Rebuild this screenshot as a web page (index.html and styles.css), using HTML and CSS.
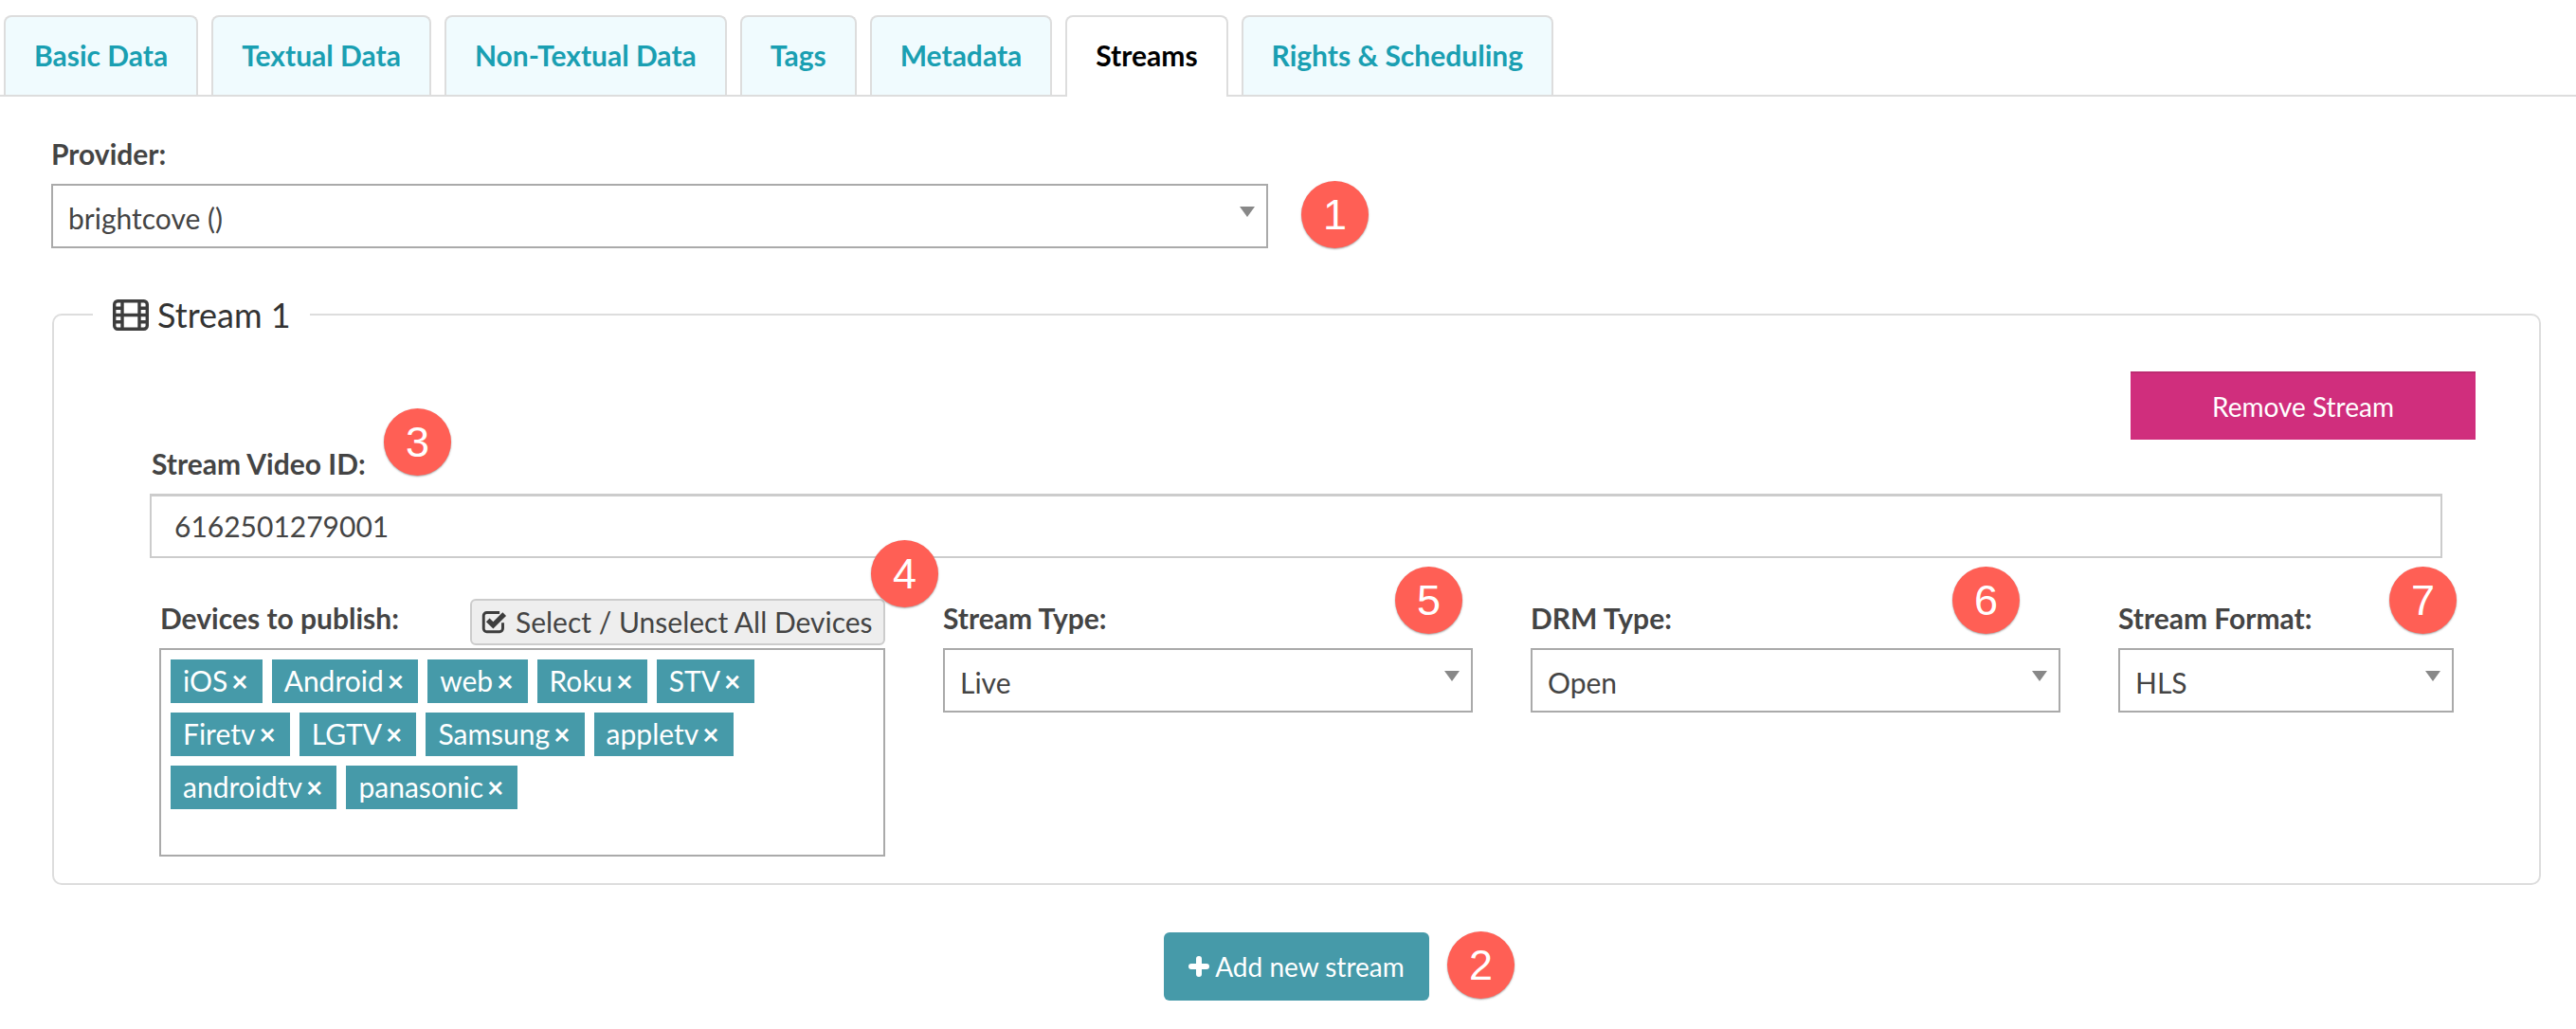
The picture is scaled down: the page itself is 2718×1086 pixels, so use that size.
FILE: index.html
```html
<!DOCTYPE html>
<html lang="en">
<head>
    <meta charset="UTF-8">
    <meta name="viewport" content="width=device-width, initial-scale=1.0">
    <title>Streams</title>
    <link rel="stylesheet" href="styles.css">
</head>
<body>
    <div class="page">
        <ul class="tabs">
            <li class="tab">Basic Data</li>
            <li class="tab">Textual Data</li>
            <li class="tab">Non-Textual Data</li>
            <li class="tab">Tags</li>
            <li class="tab">Metadata</li>
            <li class="tab tab-active">Streams</li>
            <li class="tab">Rights &amp; Scheduling</li>
        </ul>

        <div class="content">
            <div class="provider">
                <label class="field-label">Provider:</label>
                <div class="select-wrap">
                    <select class="select"><option>brightcove ()</option></select>
                </div>
            </div>

            <fieldset class="stream">
                <legend class="stream-legend">
                    <svg class="film-icon" viewBox="0 0 38 33" fill="none" stroke="#3d3d3d" stroke-width="3.4">
                        <rect x="1.7" y="1.7" width="34.6" height="29.6" rx="3.5"/>
                        <path d="M10 2v29M28 2v29M10 16.5h18M2 9.2h8M2 16.5h8M2 23.8h8M28 9.2h8M28 16.5h8M28 23.8h8"/>
                    </svg>
                    Stream 1
                </legend>

                <div class="stream-actions">
                    <button class="btn-remove" type="button">Remove Stream</button>
                </div>

                <div class="video-id">
                    <label class="field-label">Stream Video ID:</label>
                    <input class="text-input" type="text" value="6162501279001">
                </div>

                <div class="stream-row">
                    <div class="col col-devices">
                        <div class="devices-head">
                            <label class="field-label">Devices to publish:</label>
                            <button class="btn-select-all" type="button">
                                <svg class="check-icon" viewBox="0 0 24 23" fill="none">
                                    <path d="M20 12.5V18a3 3 0 0 1-3 3H5a3 3 0 0 1-3-3V6a3 3 0 0 1 3-3h12" stroke="#3d3d3d" stroke-width="2.6"/>
                                    <path d="M6 10l5 5 10.5-10.5" stroke="#3d3d3d" stroke-width="4.6"/>
                                </svg>
                                Select / Unselect All Devices
                            </button>
                        </div>
                        <div class="tag-box">
                            <span class="tag">iOS<b>×</b></span>
                            <span class="tag">Android<b>×</b></span>
                            <span class="tag">web<b>×</b></span>
                            <span class="tag">Roku<b>×</b></span>
                            <span class="tag">STV<b>×</b></span>
                            <span class="tag">Firetv<b>×</b></span>
                            <span class="tag">LGTV<b>×</b></span>
                            <span class="tag">Samsung<b>×</b></span>
                            <span class="tag">appletv<b>×</b></span>
                            <span class="tag">androidtv<b>×</b></span>
                            <span class="tag">panasonic<b>×</b></span>
                        </div>
                    </div>
                    <div class="col col-type">
                        <label class="field-label">Stream Type:</label>
                        <div class="select-wrap">
                            <select class="select"><option>Live</option></select>
                        </div>
                    </div>
                    <div class="col col-type">
                        <label class="field-label">DRM Type:</label>
                        <div class="select-wrap">
                            <select class="select"><option>Open</option></select>
                        </div>
                    </div>
                    <div class="col col-format">
                        <label class="field-label">Stream Format:</label>
                        <div class="select-wrap">
                            <select class="select"><option>HLS</option></select>
                        </div>
                    </div>
                </div>
            </fieldset>

            <div class="add-row">
                <button class="btn-add" type="button">
                    <svg class="plus-icon" viewBox="0 0 22 22" fill="none" stroke="#fff" stroke-width="6" stroke-linecap="round">
                        <path d="M11 3v16M3 11h16"/>
                    </svg>
                    Add new stream
                </button>
            </div>
        </div>

        <!-- numbered callouts sit on top of the form -->
        <span class="badge badge-1">1</span>
        <span class="badge badge-2">2</span>
        <span class="badge badge-3">3</span>
        <span class="badge badge-4">4</span>
        <span class="badge badge-5">5</span>
        <span class="badge badge-6">6</span>
        <span class="badge badge-7">7</span>
    </div>
</body>
</html>
```

FILE: styles.css
```css
body {
    font-family: Lato, "Open Sans", sans-serif;
    font-size: 30px;
    color: #444;
    background-color: #fff;
    margin: 0;
}

.page {
    position: relative;
    height: 1086px;
    overflow: hidden;
}

/* tabs */
.tabs {
    display: flex;
    gap: 14px;
    list-style: none;
    margin: 0;
    padding: 16px 0 0 4px;
    height: 84px;
    box-sizing: content-box;
    border-bottom: 2px solid #ddd;
}

.tab {
    height: 84px;
    box-sizing: border-box;
    padding: 22px 30px 0;
    line-height: 36px;
    font-size: 30px;
    font-weight: bold;
    color: #1a9fb2;
    background-color: #f0fbfe;
    border: 2px solid #ddd;
    border-bottom: none;
    border-radius: 8px 8px 0 0;
}

.tab-active {
    height: 86px;
    color: #000;
    background-color: #fff;
}

/* form */
.content {
    padding: 42px 37px 0 54px;
}

.field-label {
    display: block;
    font-weight: bold;
    line-height: 36px;
    color: #444;
}

.provider {
    width: 1284px;
}

.provider .field-label {
    margin-bottom: 14px;
}

.select-wrap {
    position: relative;
}

.select-wrap::after {
    content: "";
    position: absolute;
    top: 24px;
    right: 14px;
    border-left: 8px solid transparent;
    border-right: 8px solid transparent;
    border-top: 11px solid #888;
}

.select {
    display: block;
    width: 100%;
    height: 68px;
    box-sizing: border-box;
    padding: 3px 16px 0;
    font-family: inherit;
    font-size: 30px;
    color: #444;
    background: #fff;
    border: 2px solid #aaa;
    border-radius: 0;
    appearance: none;
}

.stream {
    margin: 49px 0 0 1px;
    padding: 0 67px 0 101px;
    height: 623px;
    box-sizing: border-box;
    border: 2px solid #ddd;
    border-radius: 10px;
    min-width: 0;
}

.stream-legend {
    margin-left: -60px;
    padding: 0 20px 0 21px;
    font-size: 36px;
    line-height: 42px;
    color: #333;
    display: flex;
    align-items: center;
    gap: 9px;
}

.film-icon {
    width: 38px;
    height: 33px;
}

.stream-actions {
    display: flex;
    justify-content: flex-end;
    margin-top: 39px;
}

.btn-remove {
    width: 364px;
    height: 72px;
    font-family: inherit;
    font-size: 28px;
    color: #fff;
    background-color: #d02e7d;
    border: none;
    border-top: 2px solid #bd2c72;
}

.video-id {
    margin: 7px 35px 0 0;
}

.video-id .field-label {
    margin: 0 0 14px 2px;
}

.text-input {
    display: block;
    width: 100%;
    height: 68px;
    box-sizing: border-box;
    padding: 0 24px 2px;
    font-family: inherit;
    font-size: 30px;
    color: #444;
    border: 2px solid #ccc;
    border-top-width: 3px;
    outline: none;
}

.stream-row {
    display: flex;
    margin: 43px 0 0 10px;
}

.col .field-label {
    margin-bottom: 14px;
}

.col-devices {
    flex: none;
    width: 766px;
    margin-right: 61px;
}

.col-type {
    flex: none;
    width: 559px;
    margin-top: 2px;
    margin-right: 61px;
}

.col-format {
    flex: none;
    width: 354px;
    margin-top: 2px;
}

.devices-head {
    display: flex;
    justify-content: space-between;
    align-items: flex-start;
    height: 52px;
}

.devices-head .field-label {
    margin: 2px 0 0 1px;
}

.btn-select-all {
    width: 438px;
    height: 49px;
    padding: 0 0 2px 10px;
    display: flex;
    align-items: center;
    gap: 9px;
    font-family: inherit;
    font-size: 30px;
    color: #444;
    background-color: #eee;
    border: 2px solid #ccc;
    border-radius: 6px;
}

.check-icon {
    width: 27px;
    height: 26px;
}

.tag-box {
    height: 220px;
    box-sizing: border-box;
    padding: 10px;
    display: flex;
    flex-wrap: wrap;
    align-content: flex-start;
    gap: 10px;
    border: 2px solid #aaa;
}

.tag {
    height: 46px;
    line-height: 44px;
    padding: 0 15px 0 13px;
    color: #fff;
    background-color: #469aa9;
}

.tag b {
    margin-left: 4px;
}

.add-row {
    display: flex;
    margin: 50px 0 0 1174px;
}

.btn-add {
    width: 280px;
    height: 72px;
    padding: 0;
    display: flex;
    align-items: center;
    justify-content: center;
    gap: 6px;
    font-family: inherit;
    font-size: 28px;
    color: #fff;
    background-color: #469aa9;
    border: none;
    border-radius: 6px;
}

.plus-icon {
    width: 22px;
    height: 22px;
}

/* callouts */
.badge {
    position: absolute;
    width: 71px;
    height: 71px;
    border-radius: 50%;
    display: flex;
    align-items: center;
    justify-content: center;
    font-family: "Liberation Sans", Arial, sans-serif;
    font-size: 45px;
    color: #fff;
    background-color: #ff5f55;
    box-shadow: 0 1px 2px rgba(0, 0, 0, 0.35);
}

.badge-1 { left: 1373px; top: 191px; }
.badge-2 { left: 1527px; top: 983px; }
.badge-3 { left: 405px; top: 431px; }
.badge-4 { left: 919px; top: 570px; }
.badge-5 { left: 1472px; top: 598px; }
.badge-6 { left: 2060px; top: 598px; }
.badge-7 { left: 2521px; top: 598px; }
```
